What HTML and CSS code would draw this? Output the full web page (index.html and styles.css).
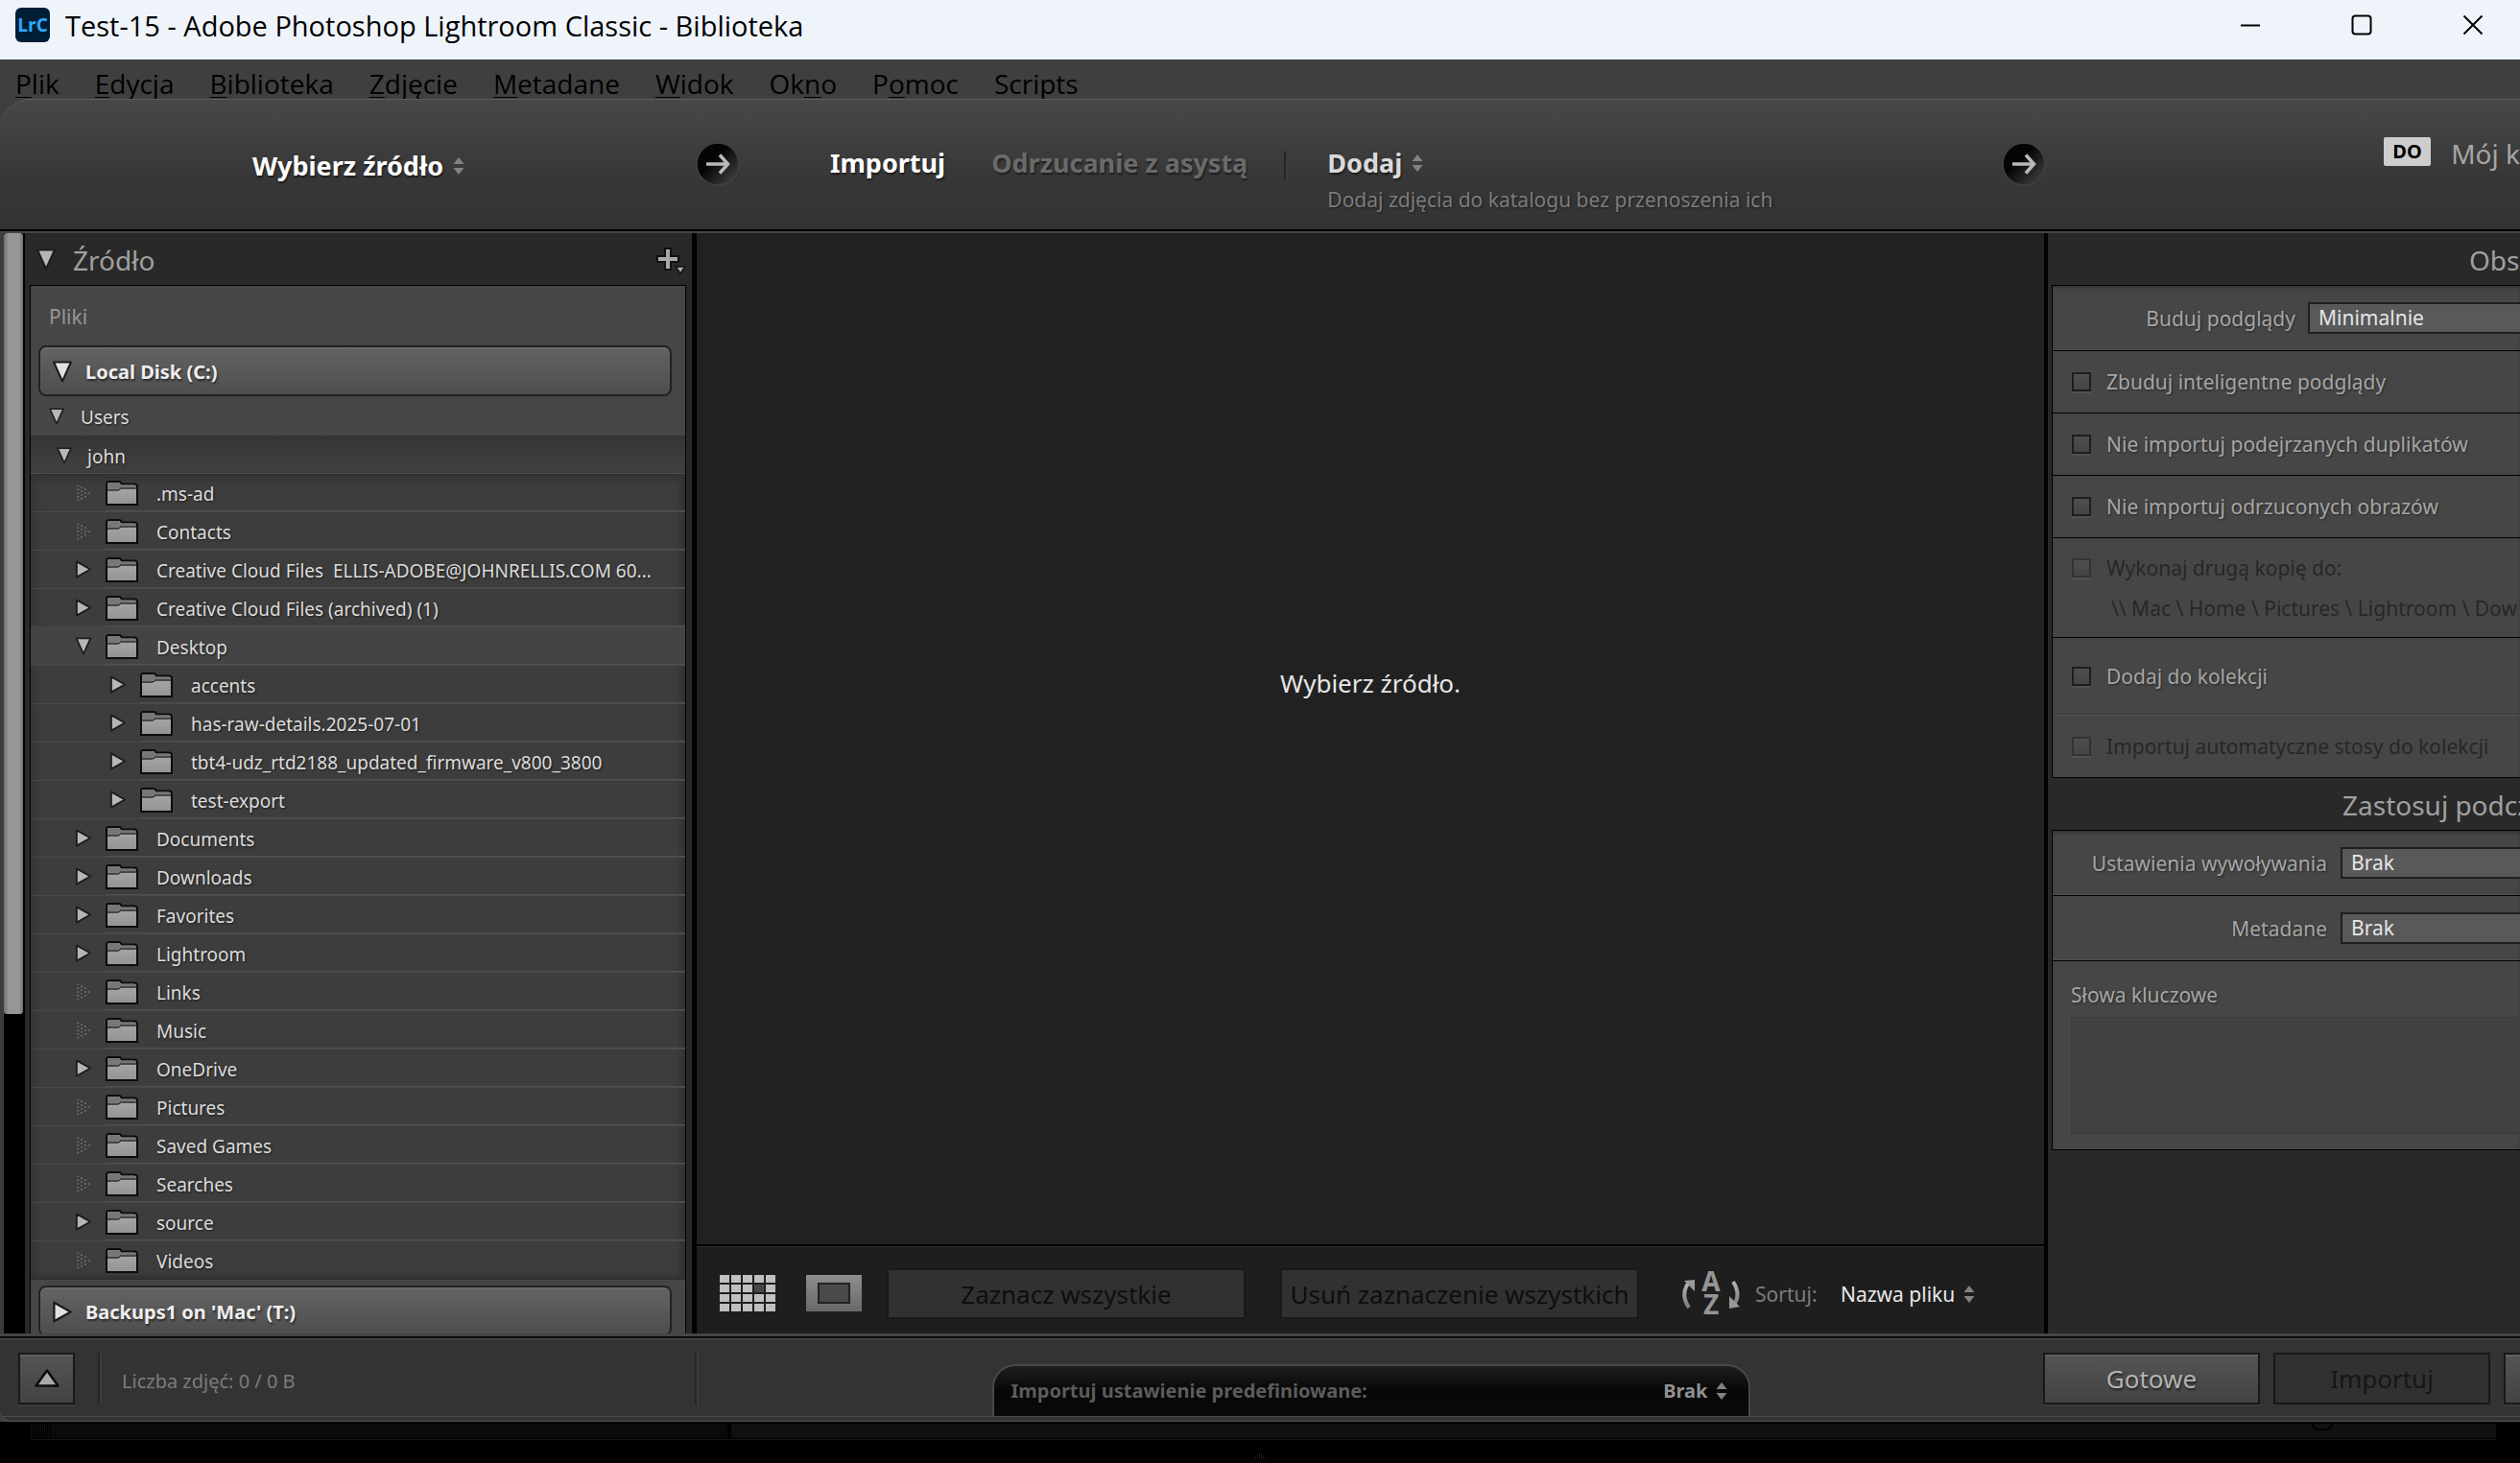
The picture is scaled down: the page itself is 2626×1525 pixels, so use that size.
FILE: index.html
```html
<!DOCTYPE html>
<html lang="pl">
<head>
<meta charset="utf-8">
<title>Test-15 - Adobe Photoshop Lightroom Classic - Biblioteka</title>
<link rel="stylesheet" href="styles.css">
</head>
<body>
<svg class="defs" aria-hidden="true">
  <defs>
    <linearGradient id="g-fold" x1="0" y1="0" x2="0" y2="1"><stop offset="0" stop-color="#acacac"/><stop offset="1" stop-color="#939393"/></linearGradient>
    <linearGradient id="g-view" x1="0" y1="0" x2="0" y2="1"><stop offset="0" stop-color="#8e8e8e"/><stop offset="1" stop-color="#686868"/></linearGradient>
    <linearGradient id="g-circ" x1="0" y1="0" x2="1" y2="1"><stop offset="0.4" stop-color="#050505"/><stop offset="1" stop-color="#4a4a4a"/></linearGradient>
    <linearGradient id="g-sort" x1="0" y1="0" x2="0" y2="1"><stop offset="0" stop-color="#b4b4b4"/><stop offset="1" stop-color="#7c7c7c"/></linearGradient>
  </defs>
  <symbol id="down" viewBox="0 0 20 22"><path class="tri-shape" d="M1.500 1.500h17L10 20.500z"/></symbol>
  <symbol id="right" viewBox="0 0 18 20"><path class="tri-shape" d="M1.500 1.500v17L16.500 10z"/></symbol>
  <symbol id="dots" viewBox="0 0 18 20"><path d="M2 2.500h2M2 6.500h2M2 10.500h2M2 14.500h2M2 18.500h2M6 4.500h2M6 8.500h2M6 12.500h2M6 16.500h2M10 6.500h2M10 10.500h2M10 14.500h2M14 10.500h2" stroke="#747474" stroke-width="1.500"/></symbol>
  <symbol id="folder" viewBox="0 0 34 26"><path d="M1 3.500Q1 1 3.500 1H14q2 0 2.500 2.500H30q3 0 3 3V25H1z" fill="url(#g-fold)" stroke="#0c0c0c" stroke-width="2"/><path d="M2 4Q2 2 4 2h9.500q1.500 0 2.500 3h16v2H16q-2 0-3 2H2z" fill="#777"/><path d="M2 10h10.500q2 0 3-2H32" fill="none" stroke="#2a2a2a" stroke-width="1.500"/></symbol>
  <symbol id="updown" viewBox="0 0 12 18"><path d="M6 0l5.500 7h-11zM6 18L.5 11h11z" fill="#828282"/></symbol>
  <symbol id="go" viewBox="0 0 46 46"><circle cx="23" cy="23" r="22" fill="url(#g-circ)" stroke="#414141" stroke-width="1.500"/><path d="M11 23h21M25 13.500l8.500 9.500-8.500 9.500" fill="none" stroke="#b9b9b9" stroke-width="3.500"/></symbol>
</svg>

<header class="titlebar">
  <svg class="applogo" viewBox="0 0 36 36" role="img" aria-label="Lightroom Classic"><rect width="36" height="36" rx="6" fill="#001e36"/><text x="18" y="24.500" text-anchor="middle" class="logotext">LrC</text></svg>
  <h1 class="wintitle">Test-15 - Adobe Photoshop Lightroom Classic - Biblioteka</h1>
  <div class="winbuttons">
    <button type="button" aria-label="Minimalizuj"><svg viewBox="0 0 22 22"><path d="M1 11.500h20" /></svg></button>
    <button type="button" aria-label="Maksymalizuj"><svg viewBox="0 0 22 22"><rect x="1.500" y="1.500" width="19" height="19" rx="3"/></svg></button>
    <button type="button" aria-label="Zamknij"><svg viewBox="0 0 22 22"><path d="M1.500 1.500l19 19M20.500 1.500l-19 19"/></svg></button>
  </div>
</header>

<nav class="menubar">
  <button type="button"><u>P</u>lik</button>
  <button type="button"><u>E</u>dycja</button>
  <button type="button"><u>B</u>iblioteka</button>
  <button type="button"><u>Z</u>djęcie</button>
  <button type="button"><u>M</u>etadane</button>
  <button type="button"><u>W</u>idok</button>
  <button type="button">Ok<u>n</u>o</button>
  <button type="button">P<u>o</u>moc</button>
  <button type="button">Scripts</button>
</nav>

<div class="dialog">
  <div class="steps">
    <div class="step-source">
      <button type="button" class="pick strong">Wybierz źródło <svg class="updown"><use href="#updown"/></svg></button>
    </div>
    <div class="step-mode">
      <svg class="go"><use href="#go"/></svg>
      <button type="button" class="pick strong">Importuj</button>
      <button type="button" class="pick off">Odrzucanie z asystą</button>
      <span class="bar"></span>
      <div class="method">
        <button type="button" class="pick add">Dodaj <svg class="updown"><use href="#updown"/></svg></button>
        <p>Dodaj zdjęcia do katalogu bez przenoszenia ich</p>
      </div>
      <svg class="go last"><use href="#go"/></svg>
    </div>
    <div class="step-target">
      <span class="badge">DO</span>
      <span class="catalog">Mój k</span>
    </div>
  </div>

  <main class="work">
    <div class="scroll"><div class="thumb"></div></div>
    <section class="source">
      <div class="panelhead">
        <button type="button" aria-label="Zwiń"><svg class="tri-l"><use href="#down"/></svg></button>
        <h2>Źródło</h2>
        <button type="button" class="plus" aria-label="Dodaj źródło"><svg viewBox="0 0 32 30"><path d="M10 1h6v8h8v6h-8v8h-6v-8H2V9h8z" fill="#a9a9a9" stroke="#111" stroke-width="2"/><path d="M21 20h10l-5 7z" fill="#a9a9a9" stroke="#111" stroke-width="1.500"/></svg></button>
      </div>
      <div class="tree">
        <p class="files">Pliki</p>
        <button type="button" class="disk"><svg class="tri-l"><use href="#down"/></svg>Local Disk (C:)</button>
        <div class="row users"><button type="button" aria-label="Zwiń Users"><svg class="tri-d"><use href="#down"/></svg></button><span>Users</span></div>
        <div class="row john"><button type="button" aria-label="Zwiń john"><svg class="tri-d"><use href="#down"/></svg></button><span>john</span></div>
        <ul id="folders">
          <li class="row"><svg class="tri"><use href="#dots"/></svg><div><svg class="folder"><use href="#folder"/></svg><span>.ms-ad</span></div></li>
          <li class="row"><svg class="tri"><use href="#dots"/></svg><div><svg class="folder"><use href="#folder"/></svg><span>Contacts</span></div></li>
          <li class="row"><svg class="tri"><use href="#right"/></svg><div><svg class="folder"><use href="#folder"/></svg><span>Creative Cloud Files&nbsp; ELLIS-ADOBE@JOHNRELLIS.COM 60...</span></div></li>
          <li class="row"><svg class="tri"><use href="#right"/></svg><div><svg class="folder"><use href="#folder"/></svg><span>Creative Cloud Files (archived) (1)</span></div></li>
          <li class="row open"><svg class="tri"><use href="#down"/></svg><div><svg class="folder"><use href="#folder"/></svg><span>Desktop</span></div></li>
          <li class="row sub"><svg class="tri"><use href="#right"/></svg><div><svg class="folder"><use href="#folder"/></svg><span>accents</span></div></li>
          <li class="row sub"><svg class="tri"><use href="#right"/></svg><div><svg class="folder"><use href="#folder"/></svg><span>has-raw-details.2025-07-01</span></div></li>
          <li class="row sub"><svg class="tri"><use href="#right"/></svg><div><svg class="folder"><use href="#folder"/></svg><span>tbt4-udz_rtd2188_updated_firmware_v800_3800</span></div></li>
          <li class="row sub"><svg class="tri"><use href="#right"/></svg><div><svg class="folder"><use href="#folder"/></svg><span>test-export</span></div></li>
          <li class="row"><svg class="tri"><use href="#right"/></svg><div><svg class="folder"><use href="#folder"/></svg><span>Documents</span></div></li>
          <li class="row"><svg class="tri"><use href="#right"/></svg><div><svg class="folder"><use href="#folder"/></svg><span>Downloads</span></div></li>
          <li class="row"><svg class="tri"><use href="#right"/></svg><div><svg class="folder"><use href="#folder"/></svg><span>Favorites</span></div></li>
          <li class="row"><svg class="tri"><use href="#right"/></svg><div><svg class="folder"><use href="#folder"/></svg><span>Lightroom</span></div></li>
          <li class="row"><svg class="tri"><use href="#dots"/></svg><div><svg class="folder"><use href="#folder"/></svg><span>Links</span></div></li>
          <li class="row"><svg class="tri"><use href="#dots"/></svg><div><svg class="folder"><use href="#folder"/></svg><span>Music</span></div></li>
          <li class="row"><svg class="tri"><use href="#right"/></svg><div><svg class="folder"><use href="#folder"/></svg><span>OneDrive</span></div></li>
          <li class="row"><svg class="tri"><use href="#dots"/></svg><div><svg class="folder"><use href="#folder"/></svg><span>Pictures</span></div></li>
          <li class="row"><svg class="tri"><use href="#dots"/></svg><div><svg class="folder"><use href="#folder"/></svg><span>Saved Games</span></div></li>
          <li class="row"><svg class="tri"><use href="#dots"/></svg><div><svg class="folder"><use href="#folder"/></svg><span>Searches</span></div></li>
          <li class="row"><svg class="tri"><use href="#right"/></svg><div><svg class="folder"><use href="#folder"/></svg><span>source</span></div></li>
          <li class="row"><svg class="tri"><use href="#dots"/></svg><div><svg class="folder"><use href="#folder"/></svg><span>Videos</span></div></li>
        </ul>
        <button type="button" class="disk second"><svg class="tri-r"><use href="#right"/></svg>Backups1 on 'Mac' (T:)</button>
      </div>
    </section>

    <section class="stage">
      <div class="preview">Wybierz źródło.</div>
      <div class="toolbar">
        <button type="button" class="view-grid" aria-label="Widok siatki"><svg class="view" viewBox="0 0 58 38"><path fill="#c0c0c0" d="M0 0h10v8H0zM12 0h10v8H12zM24 0h10v8H24zM36 0h10v8H36zM48 0h10v8H48zM0 10h10v8H0zM12 10h10v8H12zM24 10h10v8H24zM48 10h10v8H48zM0 20h10v8H0zM12 20h10v8H12zM24 20h10v8H24zM36 20h10v8H36zM48 20h10v8H48zM0 30h10v8H0zM12 30h10v8H12zM24 30h10v8H24zM36 30h10v8H36zM48 30h10v8H48z"/><path fill="#484848" d="M36 10h10v8H36z"/></svg></button>
        <button type="button" class="view-loupe" aria-label="Widok lupy"><svg class="view" viewBox="0 0 58 38"><rect width="58" height="38" fill="url(#g-view)"/><rect x="13" y="9" width="32" height="20" fill="#4a4a4a" stroke="#222" stroke-width="2"/></svg></button>
        <button type="button" class="wide" disabled>Zaznacz wszystkie</button>
        <button type="button" class="wide" disabled>Usuń zaznaczenie wszystkich</button>
        <button type="button" class="order" aria-label="Kierunek sortowania"><svg viewBox="0 0 64 48"><g fill="none" stroke="url(#g-sort)" stroke-width="4"><path d="M9 39Q0 26 8 14"/><path d="M55 12q9 14 0 25"/></g><path d="M4 11l11-1v12zM51 27v13l11-2z" fill="#999"/><g class="az" text-anchor="middle"><text x="32" y="22">A</text><text x="32" y="46">Z</text></g></svg></button>
        <span class="sortlabel">Sortuj:</span>
        <button type="button" class="sortby">Nazwa pliku <svg class="updown"><use href="#updown"/></svg></button>
      </div>
    </section>

    <section class="options">
      <div class="panelhead end"><h2 class="w-obs">Obs</h2></div>
      <div class="group">
        <div class="field"><label for="prev" class="l-a">Buduj podglądy</label><select id="prev"><option>Minimalnie</option></select></div>
        <label class="check"><input type="checkbox">Zbuduj inteligentne podglądy</label>
        <label class="check"><input type="checkbox">Nie importuj podejrzanych duplikatów</label>
        <label class="check"><input type="checkbox">Nie importuj odrzuconych obrazów</label>
        <div class="copy">
          <label class="check dim"><input type="checkbox" disabled>Wykonaj drugą kopię do:</label>
          <p>\\ Mac \ Home \ Pictures \ Lightroom \ Dow</p>
        </div>
        <label class="check tall"><input type="checkbox">Dodaj do kolekcji</label>
        <label class="check dim soft"><input type="checkbox" disabled>Importuj automatyczne stosy do kolekcji</label>
      </div>
      <div class="panelhead end"><h2 class="w-apply">Zastosuj podcz</h2></div>
      <div class="group">
        <div class="field"><label for="dev" class="l-b">Ustawienia wywoływania</label><select id="dev"><option>Brak</option></select></div>
        <div class="field"><label for="meta" class="l-b">Metadane</label><select id="meta"><option>Brak</option></select></div>
        <div class="keywords"><label for="kw">Słowa kluczowe</label><textarea id="kw"></textarea></div>
      </div>
    </section>
  </main>

  <footer class="foot">
    <div class="foot-left">
      <button type="button" class="act mini" aria-label="Mniej opcji"><svg viewBox="0 0 28 26"><path d="M14 4.500l11.500 16h-23z" fill="#a8a8a8" stroke="#0c0c0c" stroke-width="2.500" stroke-linejoin="round"/></svg></button>
      <span class="bar"></span>
      <span class="count">Liczba zdjęć: 0 / 0 B</span>
      <span class="bar push"></span>
    </div>
    <div class="foot-mid">
      <div class="preset">
        <span>Importuj ustawienie predefiniowane:</span>
        <button type="button">Brak <svg class="updown"><use href="#updown"/></svg></button>
      </div>
    </div>
    <div class="foot-right">
      <button type="button" class="act">Gotowe</button>
      <button type="button" class="act" disabled>Importuj</button>
      <button type="button" class="act" aria-label="Anuluj"></button>
    </div>
  </footer>
</div>

<div class="behind">
  <div class="strip"><div class="strip-a"><span></span></div><div class="strip-b"><span></span></div></div>
  <svg class="hint" viewBox="0 0 14 8"><path d="M6 1h2M4 3h6M2 5h10M0 7h14" stroke="#2c2c2c" stroke-width="1" stroke-dasharray="1 1"/></svg>
</div>
</body>
</html>
```
FILE: styles.css
```css
* { box-sizing: border-box; }

body {
  margin: 0;
  height: 100vh;
  display: flex;
  flex-direction: column;
  overflow: hidden;
  background: #000;
  color: #a6a6a6;
  font: 21px/40px "Noto Sans", sans-serif;
}
h1, h2, p, ul { margin: 0; padding: 0; font-weight: 400; }
ul { list-style: none; }
button {
  display: flex;
  align-items: center;
  margin: 0;
  padding: 0;
  border: 0;
  background: none;
  color: inherit;
  font: inherit;
  white-space: nowrap;
}
svg { display: block; flex: none; }
.defs { position: absolute; width: 0; height: 0; }
.updown { width: 12px; height: 18px; }
.tri-shape { fill: var(--tri, #b6b6b6); stroke: #1c1c1c; stroke-width: 2; stroke-linejoin: round; }

/* window title and menu */
.titlebar {
  flex: none;
  display: flex;
  height: 62px;
  padding: 0 0 10px 16px;
  align-items: center;
  background: #eff4fa;
  color: #000;
}
.applogo { width: 36px; height: 36px; }
.logotext { font: 700 19px "Open Sans", sans-serif; fill: #31a8ff; }
.wintitle { flex: 1; margin-left: 16px; padding-top: 2px; font: 29px/52px "Open Sans", sans-serif; }
.winbuttons { display: flex; gap: 18px; }
.winbuttons button { width: 98px; height: 52px; justify-content: center; }
.winbuttons svg { width: 22px; height: 22px; fill: none; stroke: #000; stroke-width: 2; }
.menubar {
  flex: none;
  display: flex;
  gap: 37px;
  height: 41px;
  padding: 6px 0 0 16px;
  background: #3f3f3f;
  color: #000;
  font: 28px/38px "Open Sans", sans-serif;
}
.menubar button { height: 38px; display: block; }
.menubar u { text-decoration-thickness: 1px; text-underline-offset: 3px; }

/* import dialog */
.dialog {
  flex: 1;
  min-height: 0;
  display: flex;
  flex-direction: column;
  background: #3f3f3f;
}
.steps {
  flex: none;
  display: grid;
  grid-template-columns: 725px 1fr 492px;
  height: 138px;
  border-top: 1px solid #5e5e5e;
  border-bottom: 2px solid #000;
  border-radius: 32px 0 0 0;
  background: linear-gradient(#484848, #373737 60%, #333);
  overflow: hidden;
}
.pick { gap: 10px; font-size: 27px; font-weight: 700; text-shadow: 1px 2px 2px #1c1c1c; }
.strong { color: #fff; }
.off { color: #6a6a6a; }
.add { color: #dadada; }
.step-source { display: flex; align-items: center; justify-content: center; padding: 2px 0 0 22px; }
.step-mode { display: flex; align-items: flex-start; padding-top: 44px; }
.step-mode .pick { padding-top: 2px; }
.step-mode .off { margin-left: 48px; }
.go { width: 46px; height: 46px; margin-right: 94px; }
.go.last { margin: 0 2px 0 auto; }
.bar { width: 4px; height: 54px; background: #262626; border-right: 2px solid #3c3c3c; }
.step-mode .bar { height: 30px; margin: 10px 41px 0 38px; }
.method p { color: #7c7c7c; font-size: 21px; line-height: 36px; text-shadow: 1px 1px 2px #1c1c1c; white-space: nowrap; }
.step-target { display: flex; align-items: flex-start; padding: 34px 0 0 350px; white-space: nowrap; overflow: hidden; }
.badge { width: 50px; height: 30px; margin: 5px 21px 0 0; border-radius: 2px; background: #cdcdcd; color: #000; font-size: 20px; font-weight: 700; line-height: 30px; text-align: center; }
.catalog { padding-top: 2px; font-size: 28px; }

/* work area */
.work {
  flex: 1;
  min-height: 0;
  display: grid;
  grid-template: minmax(0, 1fr) / 26px 700px minmax(0, 1fr) 496px;
  border-top: 2px solid #454545;
  background: #292929;
  overflow: hidden;
}
.scroll { border-left: 4px solid #3d3d3d; border-right: 2px solid #000; background: #000; }
.thumb { height: 71%; border-radius: 3px; background: linear-gradient(90deg, #707070, #969696 25%, #969696 80%, #707070); }
.source { display: flex; flex-direction: column; min-height: 0; padding: 0 6px 0 5px; border-right: 5px solid #000; background: #292929; }
.panelhead { flex: none; display: flex; align-items: center; height: 54px; padding-left: 6px; }
.panelhead h2 { margin-left: 17px; padding-top: 2px; font-size: 28px; color: #a0a0a0; white-space: nowrap; }
.panelhead .plus { margin-left: auto; padding-top: 6px; }
.plus svg { width: 32px; height: 30px; }
.tri-l, .tri-r { width: 22px; height: 23px; }
.tri-d { width: 18px; height: 18px; }
.tri { width: 18px; height: 19px; }
.tree { flex: 1; min-height: 0; border: solid #000; border-width: 1px 1px 0; background: #464646; overflow: hidden; }
.files { height: 62px; padding-left: 19px; line-height: 64px; color: #969696; }
.disk {
  --tri: #e2e2e2;
  width: 660px;
  height: 53px;
  margin-left: 8px;
  padding: 2px 0 0 12px;
  gap: 13px;
  border: 2px solid #222;
  border-radius: 8px;
  background: linear-gradient(#636363, #4e4e4e);
  box-shadow: inset 0 2px 1px #6a6a6a;
  color: #eee;
  font-size: 20px;
  font-weight: 700;
  text-shadow: 1px 2px 2px #2a2a2a;
}
.disk.second { margin-top: 6px; }
.row { display: flex; align-items: center; height: 40px; color: #dcdcdc; font-size: 19px; white-space: nowrap; text-shadow: 1px 1px 2px #1c1c1c; }
.row span { padding-top: 2px; }
.users { height: 41px; padding-left: 18px; gap: 16px; }
.john { padding: 2px 0 0 26px; gap: 15px; background: linear-gradient(#343434, #3e3e3e 70%); border-bottom: 1px solid #4c4c4c; }
#folders { background: #3d3d3d; box-shadow: inset 0 8px 8px -4px #313131, inset 0 -8px 8px -6px #2c2c2c, inset 10px 0 8px -6px #383838, inset -10px 0 8px -6px #343434; }
#folders .row { padding-left: 46px; border-bottom: 1px solid #484848; }
#folders .sub { padding-left: 82px; }
#folders .open { background: #444; }
#folders .row:last-child { border-color: #2f2f2f; }
#folders .row div { flex: 1; min-width: 0; height: 39px; padding-top: 2px; display: flex; align-items: center; margin-left: 14px; gap: 19px; border-bottom: 1px solid #505050; }
#folders .row:last-child div { border-color: transparent; }
.folder { width: 34px; height: 26px; }

.stage { display: flex; flex-direction: column; min-width: 0; background: #212121; }
.preview { flex: 1; display: flex; align-items: center; justify-content: center; padding-bottom: 117px; color: #e6e6e6; font-size: 26px; }
.toolbar {
  flex: none;
  display: flex;
  align-items: center;
  height: 93px;
  padding: 7px 0 0 24px;
  border-top: 2px solid #000;
  background: #1e1e1e;
  box-shadow: inset 0 1px #2e2e2e;
}
.view { width: 58px; height: 38px; }
.view-grid { margin-right: 32px; }
.view-loupe { margin-right: 26px; }
.wide { width: 374px; height: 53px; padding-top: 2px; justify-content: center; margin: 0 36px 0 0; border: 2px solid #191919; background: #313131; color: #0e0e0e; font-size: 26px; }
.order { margin: 0 14px 0 7px; }
.order svg { width: 64px; height: 48px; overflow: visible; }
.az { font: 700 28px "Noto Sans", sans-serif; fill: #959595; }
.sortlabel { width: 89px; padding-top: 2px; color: #7c7c7c; }
.sortby { gap: 9px; padding-top: 2px; color: #e8e8e8; }

.options { display: flex; flex-direction: column; min-width: 0; border-left: 4px solid #000; padding-left: 4px; overflow: hidden; }
.end { padding: 0; justify-content: flex-end; }
.end h2 { margin: 0; }
.w-obs { width: 53px; }
.w-apply { width: 185px; }
.group { flex: none; border: solid #000; border-width: 1px 0 1px 1px; background: #464646; box-shadow: inset 0 3px 4px -1px #333; text-shadow: 1px 1px 2px #262626; }
.field { display: flex; align-items: center; height: 68px; border-bottom: 1px solid #000; box-shadow: inset 0 -1px #4e4e4e; }
.field label { flex: none; text-align: right; white-space: nowrap; }
.l-a { width: 253px; margin-right: 13px; }
.l-b { width: 286px; margin-right: 14px; }
select {
  appearance: none;
  flex: 1;
  min-width: 0;
  height: 33px;
  margin: 0;
  padding: 0 0 0 9px;
  border: solid #1f1f1f;
  border-width: 2px 0 2px 2px;
  border-radius: 0;
  background: #595959;
  color: #e6e6e6;
  font: 21px/29px "Noto Sans", sans-serif;
}
.check { display: flex; align-items: center; gap: 16px; height: 65px; padding-left: 20px; border-bottom: 1px solid #000; white-space: nowrap; }
.check input {
  appearance: none;
  width: 20px;
  height: 20px;
  margin: 0;
  border: 2px solid #1e1e1e;
  background: linear-gradient(#4f4f4f, #444);
  box-shadow: 0 2px #505050;
}
.dim, .copy p { color: #272727; text-shadow: none; }
.dim input { border-color: #333; }
.copy { height: 104px; border-bottom: 1px solid #000; }
.copy .check { height: 62px; border: 0; }
.copy p { padding-left: 61px; line-height: 22px; white-space: nowrap; }
.tall { height: 80px; border-color: #3b3b3b; }
.soft { border: 0; box-shadow: inset 0 1px #525252; }
.keywords { display: flex; flex-direction: column; padding: 15px 0 16px 19px; }
.keywords label { margin-bottom: 3px; }
textarea { height: 122px; border: solid #3b3b3b; border-width: 1px 0 1px 1px; background: #414141; resize: none; }

/* footer */
.foot {
  flex: none;
  display: grid;
  grid-template-columns: 728px 1fr 497px;
  height: 92px;
  border-bottom: 1px solid #555;
  border-radius: 0 0 0 12px;
  background: linear-gradient(#454545 3px, #000 3px 5px, #555 5px 6px, #333 6px 86px, #4b4b4b 86px 87px, #333 87px);
}
.foot > div { height: 86px; padding-top: 8px; display: flex; align-items: center; overflow: hidden; }
.foot .foot-left { padding-left: 19px; }
.foot .foot-mid { padding: 0; align-items: flex-end; justify-content: center; }
.foot-right { gap: 14px; }
.act { flex: none; width: 226px; height: 54px; justify-content: center; border: 2px solid #181818; background: linear-gradient(#545454, #434343); box-shadow: inset 0 2px #606060, 0 2px #3c3c3c; color: #b4b4b4; font-size: 26px; text-shadow: 1px 2px 2px #222; }
.act:disabled { background: #313131; box-shadow: none; color: #161616; text-shadow: none; }
.mini { width: 59px; }
.mini svg { width: 28px; height: 26px; }
.foot .bar { margin-left: 24px; }
.count { margin-left: 21px; padding-top: 6px; color: #7c7c7c; font-size: 20px; }
.foot .push { margin-left: auto; }
.preset { display: flex; width: 790px; height: 54px; padding: 0 22px 0 18px; align-items: center; justify-content: space-between; border: 2px solid #484848; border-bottom: 0; border-radius: 24px 24px 0 0; background: linear-gradient(#1f1f1f, #070707 50%, #0a0a0a); color: #5c5c5c; font-size: 20px; font-weight: 700; }
.preset button { gap: 8px; color: #909090; }

/* main window showing under the dialog */
.behind { flex: none; height: 43px; background: #000; }
.strip { display: flex; gap: 4px; height: 19px; margin: 0 25px 0 31px; border-top: 2px solid #000; border-bottom: 1px solid #161616; }
.strip-a { width: 727px; height: 15px; background: #0a0a0a; }
.strip-a span { display: block; width: 24px; height: 15px; background: repeating-linear-gradient(90deg, #000 0 1px, #0e0e0e 1px 2px); }
.strip-b { flex: 1; display: flex; justify-content: flex-end; height: 15px; background: #101010; }
.strip-b span { width: 22px; height: 7px; margin-right: 170px; border: 2px solid #000; border-top: 0; border-radius: 0 0 9px 9px; }
.hint { width: 14px; height: 8px; margin: 12px auto 0; }
```
